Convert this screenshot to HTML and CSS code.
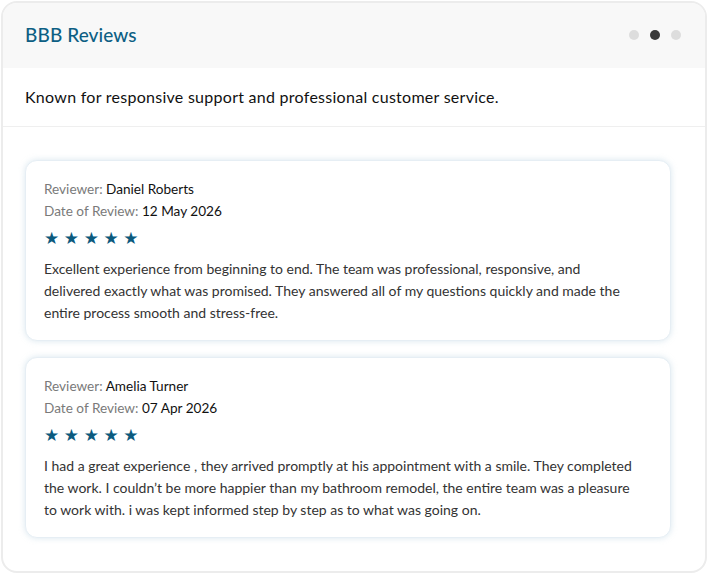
FILE: index.html
```html
<!DOCTYPE html>
<html lang="en">
<head>
<meta charset="utf-8">
<title>BBB Reviews</title>
<link rel="stylesheet" href="styles.css">
</head>
<body>
<div class="panel">
  <div class="panel-head">
    <h2 class="title">BBB Reviews</h2>
    <div class="dots">
      <span class="dot"></span>
      <span class="dot active"></span>
      <span class="dot"></span>
    </div>
  </div>
  <div class="intro">Known for responsive support and professional customer service.</div>
  <div class="list">
    <div class="card">
      <div class="meta"><span class="label">Reviewer:</span> Daniel Roberts</div>
      <div class="meta"><span class="label">Date of Review:</span> 12 May 2026</div>
      <div class="stars">★★★★★</div>
      <p class="body">Excellent experience from beginning to end. The team was professional, responsive, and delivered exactly what was promised. They answered all of my questions quickly and made the entire process smooth and stress-free.</p>
    </div>
    <div class="card">
      <div class="meta"><span class="label">Reviewer:</span> Amelia Turner</div>
      <div class="meta"><span class="label">Date of Review:</span> 07 Apr 2026</div>
      <div class="stars">★★★★★</div>
      <p class="body">I had a great experience , they arrived promptly at his appointment with a smile. They completed the work. I couldn’t be more happier than my bathroom remodel, the entire team was a pleasure to work with. i was kept informed step by step as to what was going on.</p>
    </div>
  </div>
</div>
</body>
</html>
```
FILE: styles.css
```css
* { box-sizing: border-box; }
html, body { margin: 0; padding: 0; background: #ffffff; }
body { font-family: Lato, "Noto Sans", sans-serif; color: #111; }

.panel {
  margin: 1px;
  width: 706px;
  height: 572px;
  border: 2px solid #ececec;
  border-radius: 16px;
  overflow: hidden;
  background: #fff;
}

.panel-head {
  height: 65px;
  background: #f8f8f8;
  padding: 0 24px 0 22px;
  display: flex;
  align-items: center;
  justify-content: space-between;
}
.title {
  margin: 0 0 3px;
  font-size: 19px;
  font-weight: 500;
  letter-spacing: 0.1px;
  color: #0d5f84;
}
.dots { display: flex; gap: 11px; margin-bottom: 1px; }
.dot { width: 10px; height: 10px; border-radius: 50%; background: #dddddd; }
.dot.active { background: #3a3a3a; }

.intro {
  height: 59px;
  padding: 0 22px 1px;
  display: flex;
  align-items: center;
  font-size: 16px;
  letter-spacing: 0.27px;
  color: #111;
  border-bottom: 1px solid #efefef;
}

.list {
  padding: 33px 34px 0 22px;
  display: flex;
  flex-direction: column;
  gap: 16px;
}
.card {
  border: 1px solid #e6eef4;
  border-radius: 12px;
  box-shadow: 0 0 6px rgba(150, 185, 210, 0.35);
  padding: 17px 30px 16px 18px;
  background: #fff;
}
.meta { font-size: 13.6px; line-height: 22px; color: #111; }
.label { color: #7a7a7a; }
.stars {
  margin: 8px 0 12px;
  height: 16px;
  line-height: 16px;
  font-size: 17px;
  letter-spacing: 4.6px;
  color: #0b5a7e;
  font-family: "DejaVu Sans", sans-serif;
}
.body {
  margin: 0;
  font-size: 14px;
  line-height: 22px;
  color: #333;
}
```
